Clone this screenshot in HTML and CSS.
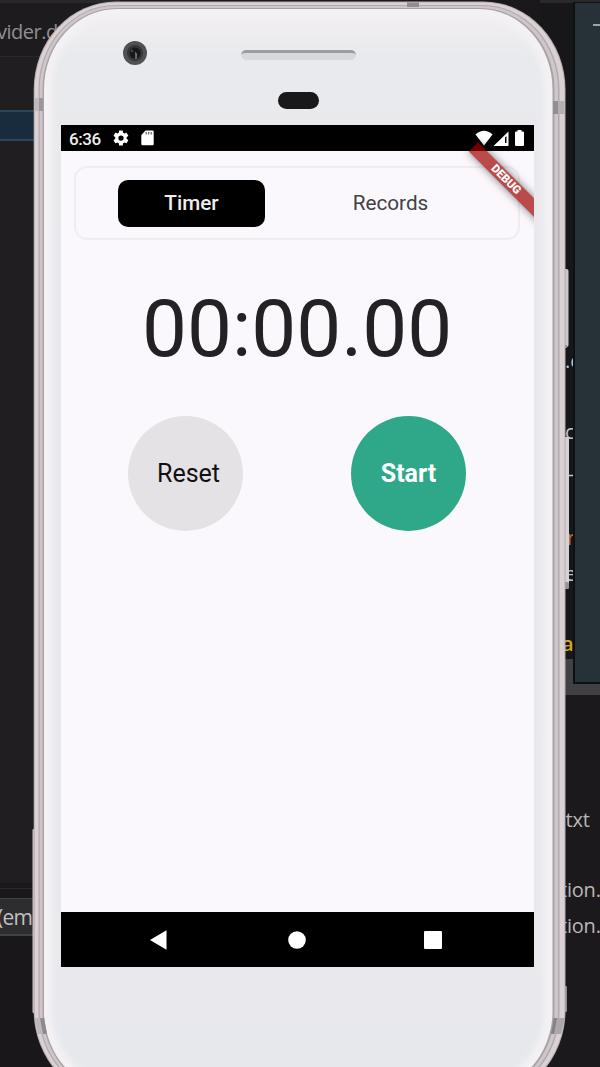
FILE: index.html
```html
<!DOCTYPE html>
<html lang="en">
<head>
<meta charset="utf-8">
<title>Timer</title>
<link rel="stylesheet" href="styles.css">
</head>
<body>
<main class="desktop">
  <div class="win title-left">vider.d</div>
  <div class="win line-left"></div>
  <div class="win selected-row"></div>
  <div class="win tree-bottom"></div>
  <div class="win input-row">(em</div>
  <div class="win terminal-left"></div>
  <div class="win editor-right"></div>
  <div class="win divider-right"></div>
  <div class="win terminal-right"></div>
  <span class="win code c1">.c</span>
  <span class="win code c2">c</span>
  <span class="win code c3">–</span>
  <span class="win code c4">r</span>
  <span class="win code c5">e</span>
  <span class="win code c6">at</span>
  <span class="win file f1">txt</span>
  <span class="win file f2">tion.</span>
  <span class="win file f3">tion.</span>
  <div class="win panel-right"><i class="minimise"></i></div>

  <svg class="shell" width="600" height="1067" viewBox="0 0 600 1067" aria-hidden="true">
    <defs>
      <linearGradient id="face" x1="0" y1="0" x2="0" y2="1">
        <stop offset="0" stop-color="#f1eef1"/><stop offset=".035" stop-color="#e8eaed"/>
        <stop offset=".11" stop-color="#e9e9ed"/><stop offset=".9" stop-color="#e9e8ed"/><stop offset="1" stop-color="#e5e8ec"/>
      </linearGradient>
      <filter id="soft" x="-5%" y="-5%" width="110%" height="110%"><feGaussianBlur stdDeviation="3"/></filter>
    </defs>
    <rect x="32.5" y="829" width="4" height="184" rx="1" fill="#c9c2c5"/>
    <rect x="562" y="986" width="5" height="26" rx="1" fill="#918d92"/>
    <rect x="562" y="269" width="6.5" height="78" rx="2" fill="#c9c8cb"/>
    <rect x="562" y="345" width="5" height="3" fill="#8f8c91"/>
    <rect x="562" y="437" width="7" height="152" rx="2" fill="#d5d3d6"/>
    <rect x="563" y="582" width="6" height="7" rx="2" fill="#969398"/>
    <rect x="33.7" y="1.5" width="531.8" height="1097" rx="82" ry="88" fill="#b5acb0"/>
    <rect x="34.7" y="2.5" width="529.8" height="1095" rx="81" ry="87" fill="#d9d1d4"/>
    <rect x="38.5" y="5" width="521" height="1090" rx="77" ry="84" fill="#b3aaae"/>
    <rect x="39.7" y="6" width="518.3" height="1088" rx="76" ry="83" fill="#cfc6ca"/>
    <rect x="42.5" y="8" width="512" height="1084" rx="74" ry="81" fill="#aaa2a7"/>
    <rect x="44" y="9" width="508.5" height="1082" rx="73" ry="80" fill="#f3f1f4"/>
    <rect x="52" y="18" width="492" height="1064" rx="65" ry="71" fill="url(#face)" filter="url(#soft)"/>
    <path d="M34 98h9.5v13H34z" fill="#c0babd"/><path d="M39 98h4.5v13H39z" fill="#9c969b"/>
    <path d="M553 101h11.5v13H553z" fill="#b5afb3"/><path d="M553 101h5v13h-5z" fill="#938e94"/>
    <path d="M407 2.5h12V7h-12z" fill="#938b90"/>
    <path d="M34.5 1018H44l3 16h-9z" fill="#bdb8bc"/><path d="M40 1018h4l3 16h-4z" fill="#8d898e"/>
    <path d="M554 1018h11l-4 16h-10z" fill="#aca7ab"/><path d="M554 1018h3l-3 16h-3z" fill="#85818a"/>
  </svg>

  <section class="phone">
    <header class="bezel">
      <svg class="camera" width="26" height="26" viewBox="0 0 26 26" aria-hidden="true">
        <circle cx="13" cy="13" r="12" fill="#505154"/><circle cx="13" cy="13" r="8" fill="#35363a"/>
        <circle cx="13" cy="13" r="5.5" fill="#17181b"/><path d="M13 11.5l2.2 2.5-.5 5h-1.5z" fill="#796e60"/><circle cx="10" cy="11" r="1.4" fill="#3a414a"/>
      </svg>
      <div class="speaker"></div>
      <div class="sensor"></div>
    </header>
    <div class="screen">
      <div class="status">
        <span class="clock">6:36</span>
        <svg class="gear" width="18" height="18" viewBox="0 0 24 24"><path fill="#fff" d="M19.4 13c.1-.3.1-.6.1-1s0-.7-.1-1l2.1-1.600c.2-.2.300-.4.100-.6l-2-3.500c-.1-.2-.4-.3-.6-.2l-2.500 1c-.5-.4-1.100-.7-1.700-1l-.4-2.600c0-.3-.2-.4-.5-.4h-4c-.3 0-.5.100-.5.400l-.4 2.600c-.6.300-1.200.6-1.700 1l-2.500-1c-.2-.1-.5 0-.6.200l-2 3.500c-.1.200-.1.400.100.600l2.100 1.600c0 .3-.1.700-.1 1s0 .7.100 1l-2.100 1.600c-.2.200-.2.400-.1.600l2 3.500c.1.200.4.300.6.200l2.500-1c.5.4 1.100.7 1.700 1l.4 2.600c0 .3.200.4.500.4h4c.3 0 .5-.1.500-.4l.4-2.600c.6-.3 1.200-.6 1.700-1l2.500 1c.2.100.5 0 .6-.2l2-3.500c.1-.2.100-.4-.1-.6zM12 15.500a3.500 3.500 0 1 1 0-7 3.500 3.500 0 0 1 0 7z"/></svg>
        <svg class="sd" width="13" height="16" viewBox="0 0 13 16"><path fill="#fff" d="M4.500 .5H11.500Q12.700.5 12.700 1.700V14Q12.700 15.300 11.500 15.300H1.500Q.3 15.300.3 14V5z"/><path stroke="#555" stroke-width="1.100" d="M5.200 2v2.500M7.700 2v2.500M10.200 2v2.500"/></svg>
        <svg class="signals" width="52" height="17" viewBox="0 0 52 17"><path fill="#fff" d="M1.500 4.500Q10-3 18.500 4.500L10 15.500z"/><path fill="#fff" fill-rule="evenodd" d="M19.500 16L34.500 1.500V16zM31 7.500V13H32.500V6z"/><path fill="#fff" d="M43.500 1.500V0h4v1.500H49q1 0 1 1V15q0 1-1 1h-7q-1 0-1-1V2.500q0-1 1-1z"/></svg>
      </div>
      <div class="app">
        <nav class="tabs"><button class="tab active">Timer</button><button class="tab">Records</button></nav>
        <div class="time">00:00.00</div>
        <div class="actions"><button class="round reset">Reset</button><button class="round start">Start</button></div>
      </div>
      <footer class="nav">
        <svg width="20" height="22" viewBox="0 0 20 22"><path d="M1 11L17.500 1.300V20.700z" fill="#fff"/></svg>
        <svg width="20" height="22" viewBox="0 0 20 22"><circle cx="10" cy="11" r="8.800" fill="#fff"/></svg>
        <svg class="recent" width="20" height="22" viewBox="0 0 20 22"><rect x="1" y="2" width="18" height="18" rx="1" fill="#fff"/></svg>
      </footer>
      <div class="ribbon-clip"><div class="ribbon">DEBUG</div></div>
    </div>
  </section>
</main>
</body>
</html>
```
FILE: styles.css
```css
* { box-sizing: border-box; }
body { margin: 0; }
button { border: 0; padding: 0; font: inherit; }
.desktop { position: relative; width: 600px; height: 1067px; overflow: hidden; background: #1a181b; font-family: Roboto, sans-serif; }

/* windows behind the phone */
.win { position: absolute; white-space: nowrap; }
.title-left { left: 0; top: 0; width: 120px; height: 57px; padding-top: 18px; border-top: 3px solid #29272a; border-bottom: 1px solid #29272a; background: #1d1b1e; color: #918f92; font: 20px/22px "Open Sans", sans-serif; letter-spacing: -.5px; text-indent: -3px; }
.line-left { left: 0; top: 57px; width: 60px; height: 826px; background: #201e21; }
.selected-row { left: 0; top: 110px; width: 60px; height: 31px; background: #192c3e; border: solid #29465a; border-width: 2px 0; }
.tree-bottom { left: 0; top: 883px; width: 60px; height: 6px; background: #1a181b; border-top: 1px solid #19171a; border-bottom: 1px solid #2b292c; }
.input-row { left: 0; top: 898px; width: 60px; height: 38px; background: #2d2c2e; border: solid #414042; border-width: 1px 0 2px; color: #c3c1c3; font: 21px/37px "Open Sans", sans-serif; letter-spacing: -.8px; text-indent: -3px; }
.terminal-left { left: 0; top: 936px; width: 60px; height: 131px; background: #1a171b; }
.editor-right { left: 540px; top: 0; width: 60px; height: 659px; background: #171618; border-top: 3px solid #2a282a; }
.divider-right { left: 550px; top: 659px; width: 50px; height: 36px; background: #414144; }
.terminal-right { left: 550px; top: 695px; width: 50px; height: 372px; background: #1b191c; }
.panel-right { left: 573px; top: 2px; width: 27px; height: 682px; background: #273238; border: solid #0d1114; border-width: 1px 0 2px 2px; }
.minimise { display: block; width: 8px; height: 2px; margin: 21px 0 0 18px; background: #9ca4a8; }
.code { font: 20px/22px "Open Sans", sans-serif; color: #bfc5ca; }
.c1 { left: 565px; top: 350px; }
.c2 { left: 565px; top: 421px; }
.c3 { left: 567px; top: 463px; }
.c4 { left: 567px; top: 527px; color: #b5793a; }
.c5 { left: 565px; top: 563px; }
.c6 { left: 562px; top: 633px; color: #d4a71d; font-weight: 600; }
.file { font: 20px/24px "Open Sans", sans-serif; letter-spacing: -.2px; color: #b9b7b9; }
.f1 { left: 565.5px; top: 808px; }
.f2 { left: 560px; top: 878px; }
.f3 { left: 560px; top: 914px; }

/* phone */
.shell { position: absolute; left: 0; top: 0; }
.phone { position: relative; width: 473px; margin-left: 61px; }
.bezel { display: grid; grid-template-columns: 180px 115px 1fr; height: 125px; align-content: start; }
.camera { margin: 40px 0 0 61px; }
.speaker { height: 10px; margin-top: 50px; border-radius: 5px; background: #d7d8da; border-top: 3px solid #9b9da3; }
.sensor { grid-column: 1 / -1; width: 41px; height: 17px; margin: 26px 0 0 217px; border-radius: 9px; background: #19191c; }
.screen { position: relative; display: flex; flex-direction: column; height: 842px; background: #faf8fc; overflow: hidden; }
.status { display: flex; height: 26px; background: #000; color: #eee; align-items: center; padding: 0 8px 0 8px; }
.clock { width: 32px; font-size: 17px; font-weight: 500; letter-spacing: -.4px; line-height: 20px; padding-top: 1px; }
.gear { margin-left: 11px; }
.sd { margin-left: 11px; }
.signals { margin-left: auto; }
.app { flex: 1; padding: 15px 14px 0 13px; }
.tabs { display: flex; gap: 52px; height: 74px; padding: 12px 0 0 42px; border: 2px solid #efedf1; border-radius: 13px; }
.tab { width: 147px; height: 47px; border-radius: 10px; background: transparent; color: #424144; font-size: 20.7px; line-height: 47px; }
.tab.active { background: #000; color: #eee; font-weight: 500; }
.time { margin: 42px 0 0 68px; color: #232124; font-size: 80px; line-height: 94px; white-space: nowrap; }
.actions { display: flex; gap: 108px; margin: 40px 0 0 54px; }
.round { width: 115px; height: 115px; border-radius: 50%; font-size: 25px; }
.reset { padding-left: 6px; background: #e4e2e5; color: #111; }
.start { background: #2fa88a; color: #fff; font-weight: 700; }
.nav { display: flex; gap: 117px; height: 55px; padding-left: 88px; align-items: center; background: #000; }
.nav svg:first-child { margin-right: 1px; }
.nav .recent { margin-left: -1px; }
.ribbon-clip { position: absolute; right: 0; top: 0; width: 90px; height: 110px; overflow: hidden; }
.ribbon { position: absolute; left: 13px; top: 55px; width: 112px; height: 13px; padding-right: 20px; transform: rotate(45deg); background: rgba(160, 0, 0, .7); box-shadow: 0 0 8px rgba(0, 0, 0, .5); color: #fff; font-size: 11.5px; font-weight: 900; line-height: 13px; text-align: center; }
```
